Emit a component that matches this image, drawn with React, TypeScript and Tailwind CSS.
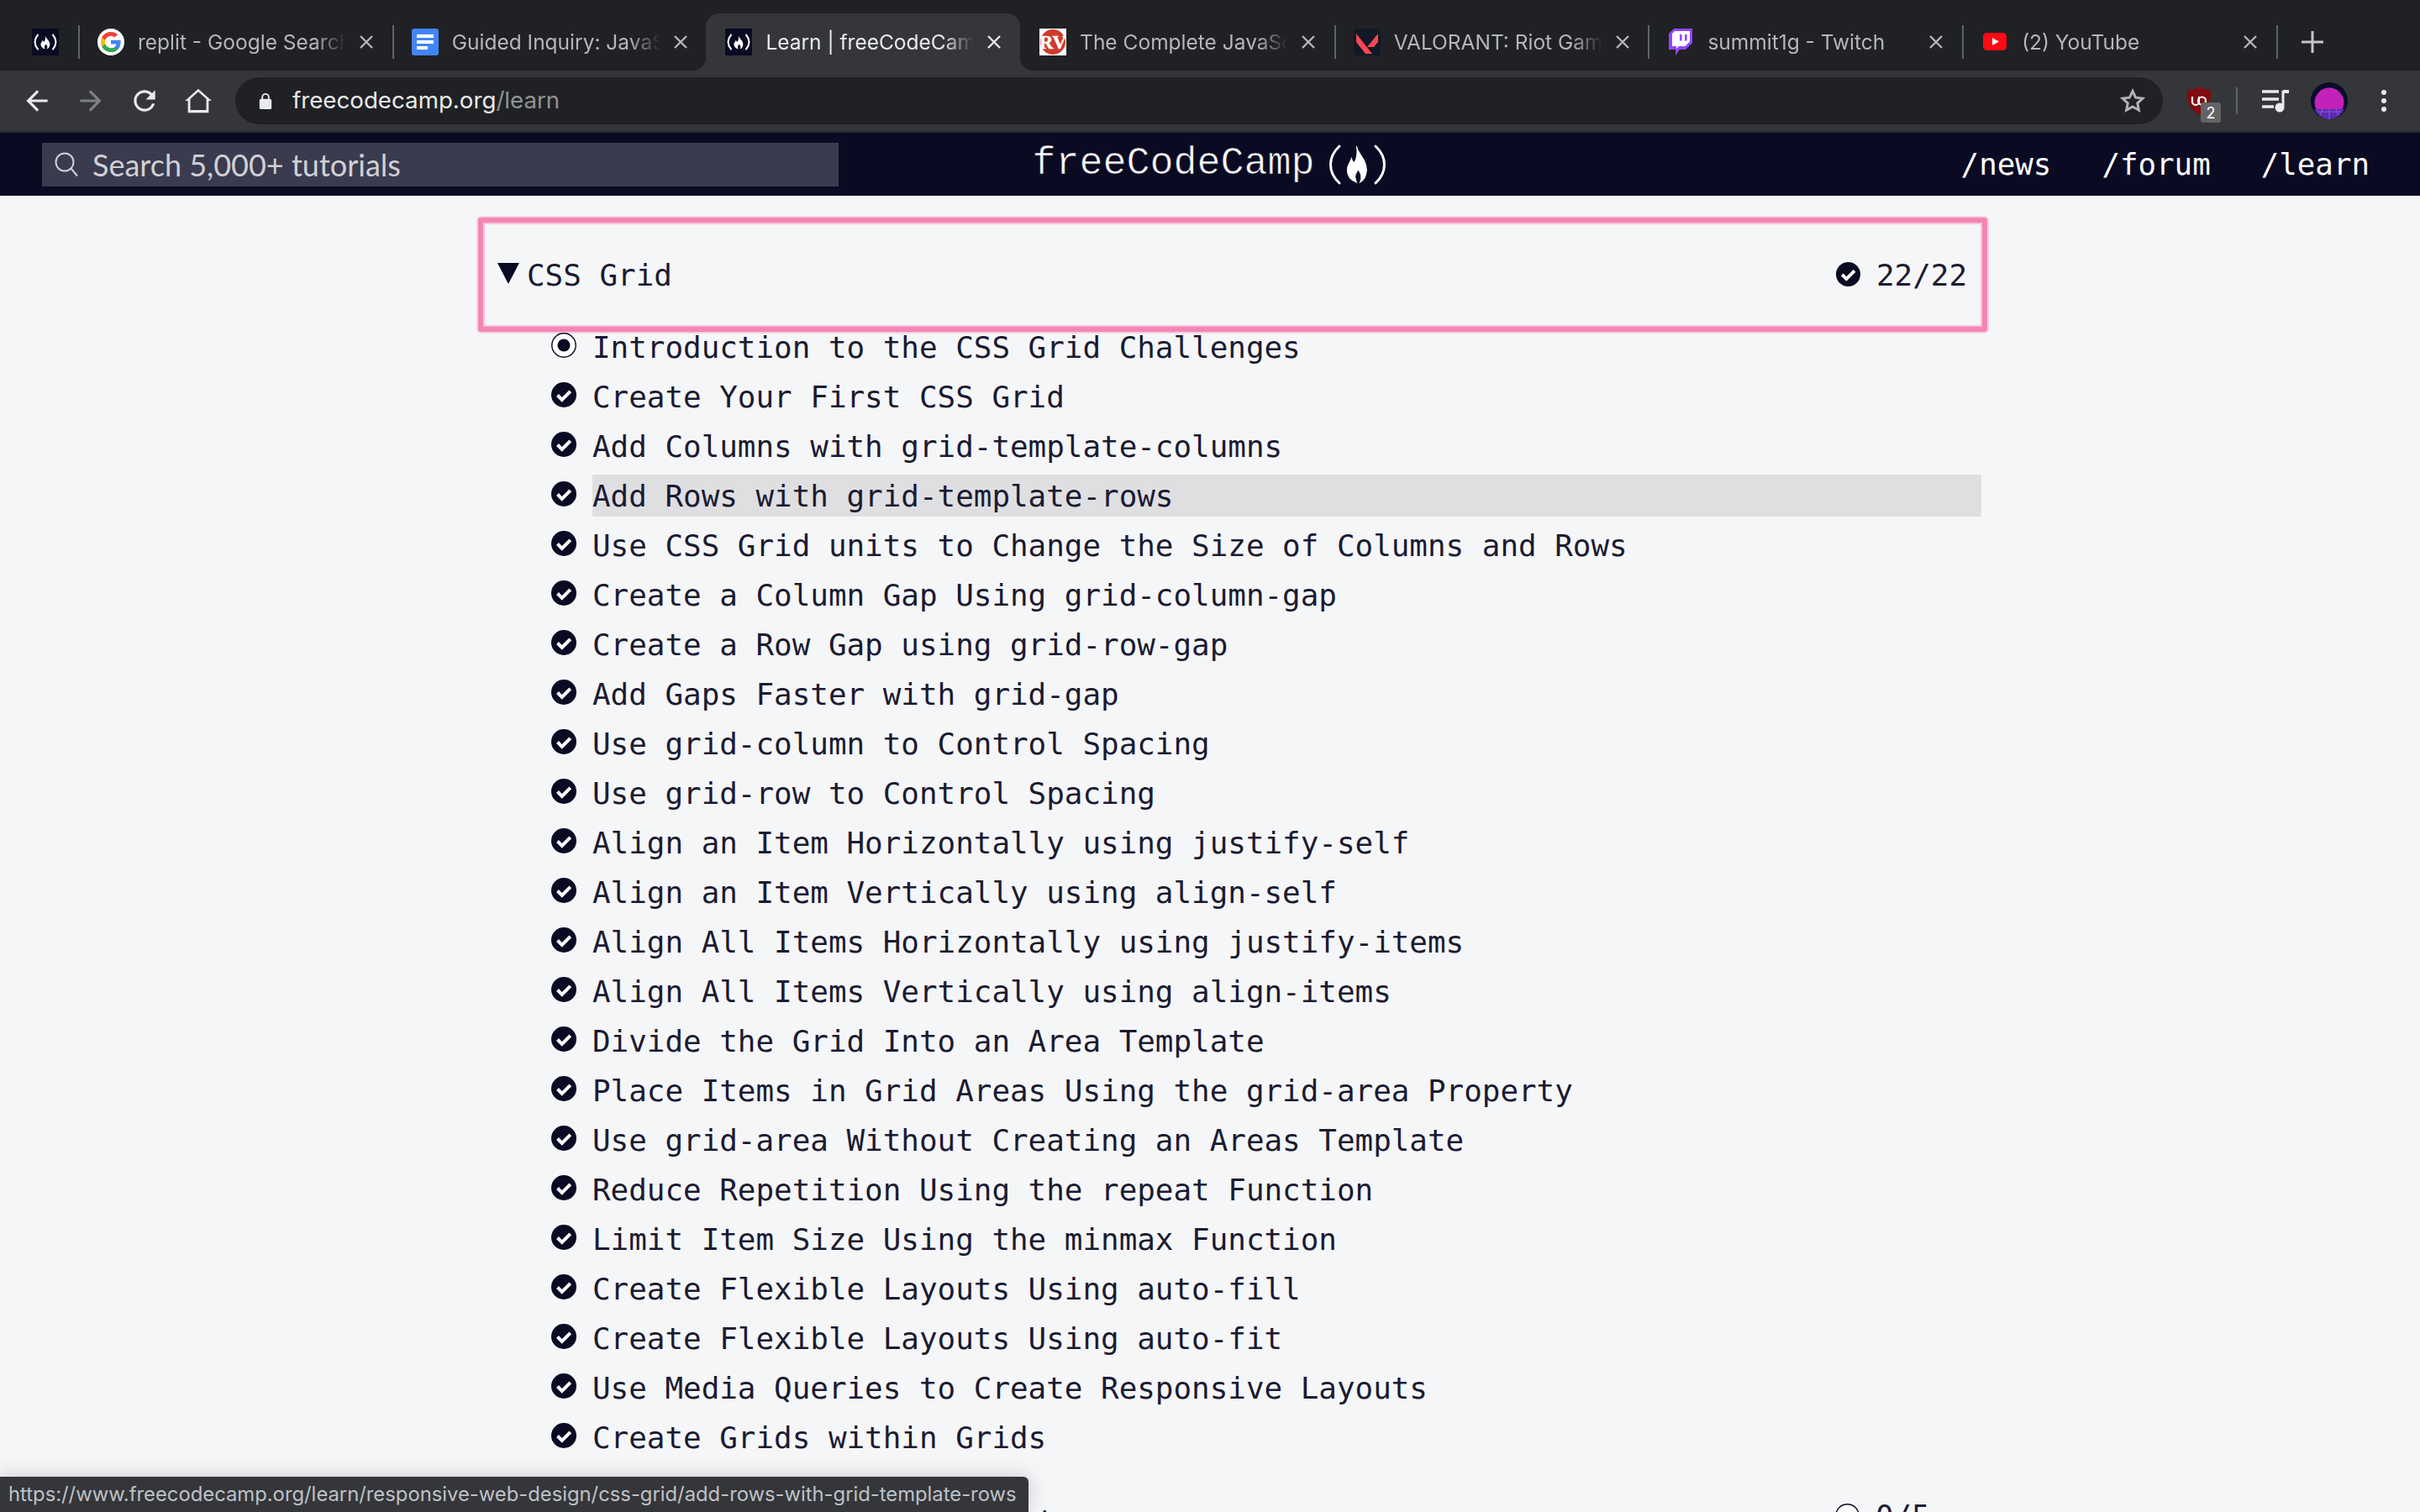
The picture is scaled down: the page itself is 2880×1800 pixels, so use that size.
import React from "react";

const FLAME =
  "M12 1C13 6 19 9 19 15.5C19 19 17 22 14.5 23C16 20.5 15.5 18 13 15C12.5 17 11 17.5 11 19.5C11 21 11.5 22 12 23C8.5 22 5.5 19.5 5.5 15.5C5.5 12.5 7.5 11 8.5 8.5C9 10 9.5 11 10.5 11C12 9 13 5 12 1Z";

function FccIcon() {
  return (
    <svg viewBox="0 0 32 32" className="w-[32px] h-[32px] shrink-0">
      <rect width="32" height="32" fill="#0a0a23" />
      <path d="M7 7.5C2.5 13 2.5 19 7 24.5M25 7.5C29.5 13 29.5 19 25 24.5" stroke="#fff" strokeWidth="2" fill="none" strokeLinecap="round" />
      <g transform="translate(6 7.6) scale(.81 .73)">
        <path d={FLAME} fill="#fff" />
      </g>
    </svg>
  );
}

function GoogleIcon() {
  return (
    <svg viewBox="0 0 32 32" className="w-[32px] h-[32px] shrink-0">
      <circle cx="16" cy="16" r="16" fill="#fff" />
      <g transform="translate(2.8 2.8) scale(1.1)">
        <path fill="#4285F4" d="M22.56 12.25c0-.78-.07-1.53-.2-2.25H12v4.26h5.92c-.26 1.37-1.04 2.53-2.21 3.31v2.77h3.57c2.08-1.92 3.28-4.74 3.28-8.09z" />
        <path fill="#34A853" d="M12 23c2.97 0 5.46-.98 7.28-2.66l-3.57-2.77c-.98.66-2.23 1.06-3.71 1.06-2.86 0-5.29-1.93-6.16-4.53H2.18v2.84C3.99 20.53 7.7 23 12 23z" />
        <path fill="#FBBC05" d="M5.84 14.09c-.22-.66-.35-1.36-.35-2.09s.13-1.43.35-2.09V7.07H2.18C1.43 8.55 1 10.22 1 12s.43 3.45 1.18 4.93l2.85-2.22.81-.62z" />
        <path fill="#EA4335" d="M12 5.38c1.62 0 3.06.56 4.21 1.64l3.15-3.15C17.45 2.09 14.97 1 12 1 7.7 1 3.99 3.47 2.18 7.07l3.66 2.84c.87-2.6 3.3-4.53 6.16-4.53z" />
      </g>
    </svg>
  );
}

function DocsIcon() {
  return (
    <svg viewBox="0 0 32 32" className="w-[32px] h-[32px] shrink-0">
      <rect width="32" height="32" rx="3" fill="#4285f4" />
      <rect x="6" y="7" width="20" height="4" fill="#fff" />
      <rect x="6" y="14" width="20" height="4" fill="#fff" />
      <rect x="6" y="21" width="13" height="4" fill="#fff" />
    </svg>
  );
}

function RvIcon() {
  return (
    <svg viewBox="0 0 32 32" className="w-[32px] h-[32px] shrink-0">
      <rect width="32" height="32" fill="#fff" />
      <circle cx="16" cy="16" r="15" fill="#cf3a2b" />
      <text x="16" y="24" textAnchor="middle" fontFamily="'Liberation Serif',serif" fontWeight="700" fontSize="23" fill="#fff" stroke="#fff" strokeWidth=".5">
        RV
      </text>
    </svg>
  );
}

function ValorantIcon() {
  return (
    <svg viewBox="0 0 32 32" className="w-[32px] h-[32px] shrink-0">
      <rect width="32" height="32" rx="4" fill="#111a24" />
      <polygon points="3,6 22,30 14,30 3,16" fill="#ff4655" />
      <polygon points="29,6 29,16 24,22 16,22" fill="#ff4655" />
    </svg>
  );
}

function TwitchIcon() {
  return (
    <svg viewBox="0 0 28 32" className="w-[28px] h-[32px] shrink-0">
      <path d="M6 0H28V17L20 25H13L8 32V25H0V6Z" fill="#9146ff" />
      <path d="M7 3H25V15.5L19.5 21H12L9 24V21H4V6Z" fill="#fff" />
      <rect x="13" y="7" width="2.6" height="7.5" fill="#9146ff" />
      <rect x="19" y="7" width="2.6" height="7.5" fill="#9146ff" />
    </svg>
  );
}

function YoutubeIcon() {
  return (
    <svg viewBox="0 0 28 32" className="w-[28px] h-[32px] shrink-0">
      <rect x="0" y="5" width="28" height="21" rx="4.5" fill="#ff0a17" />
      <polygon points="11,11 19,15.5 11,20" fill="#fff" />
    </svg>
  );
}

function CloseX({ light }: { light?: boolean }) {
  return (
    <svg viewBox="0 0 20 20" className="w-[20px] h-[20px] shrink-0">
      <path d="M3 3L17 17M17 3L3 17" stroke={light ? "#e8eaed" : "#b4b6ba"} strokeWidth="2.4" strokeLinecap="butt" />
    </svg>
  );
}

function Divider({ hidden }: { hidden?: boolean }) {
  return <span className={hidden ? "w-[2px] h-[40px] shrink-0" : "w-[2px] h-[40px] shrink-0 bg-[#5f6368]"} />;
}

function Tab({ icon, title, active, noDivider }: { icon: React.ReactNode; title: string; active?: boolean; noDivider?: boolean }) {
  return (
    <div className={active ? "relative w-[373.7px] h-[68px] flex items-center rounded-t-[16px] bg-[#35363a] shrink-0" : "relative w-[373.7px] h-[68px] flex items-center shrink-0"}>
      {active && <span className="absolute bottom-0 left-[-16px] w-[16px] h-[16px] bg-[radial-gradient(circle_at_0_0,transparent_16px,#35363a_16.5px)]" />}
      {active && <span className="absolute bottom-0 right-[-16px] w-[16px] h-[16px] bg-[radial-gradient(circle_at_100%_0,transparent_16px,#35363a_16.5px)]" />}
      <Divider hidden={noDivider || active} />
      <div className="ml-[21px] flex w-[32px] shrink-0 justify-center">{icon}</div>
      <div
        className={
          (active ? "text-[#e8eaed] " : "text-[#b4b6ba] ") +
          "ml-[16px] w-[248px] shrink-0 overflow-hidden whitespace-nowrap text-[24.5px] [font-family:Inter,sans-serif] [mask-image:linear-gradient(to_right,black_85%,transparent_100%)]"
        }
      >
        {title}
      </div>
      <div className="ml-[14px]">
        <CloseX light={active} />
      </div>
    </div>
  );
}

function ToolIcon({ d, color }: { d: string; color: string }) {
  return (
    <svg viewBox="0 0 24 24" className="w-[38px] h-[38px] shrink-0" fill={color}>
      <path d={d} />
    </svg>
  );
}

function UblockIcon() {
  return (
    <div className="relative w-[32px] h-[34px]">
      <svg viewBox="0 0 32 34" className="w-[32px] h-[34px]">
        <path d="M16 0C20 3 26 4 30 4C31 16 28 28 16 34C4 28 1 16 2 4C6 4 12 3 16 0Z" fill="#7f0d12" />
        <path d="M8 12V18A4 4 0 0 0 16 18V12M15 17A4.5 4.5 0 1 1 24 17A4.5 4.5 0 1 1 15 17" stroke="#fff" strokeWidth="2.2" fill="none" />
      </svg>
      <span className="absolute left-[18px] top-[19px] flex h-[24px] w-[24px] items-center justify-center rounded-[3px] bg-[#636466] text-[18px] text-white [font-family:Inter,sans-serif]">
        2
      </span>
    </div>
  );
}

function Check({ size = 30 }: { size?: number }) {
  return (
    <svg viewBox="0 0 30 30" style={{ width: size, height: size }} className="shrink-0">
      <circle cx="15" cy="15" r="15" fill="#0a0a23" />
      <path d="M7.5 15.5L12.8 20.8L22.8 10.8" stroke="#fff" strokeWidth="4" fill="none" />
    </svg>
  );
}

function Radio() {
  return (
    <svg viewBox="0 0 30 30" className="w-[30px] h-[30px] shrink-0">
      <circle cx="15" cy="15" r="14.2" fill="#fff" stroke="#0a0a23" strokeWidth="1.4" />
      <circle cx="15" cy="15" r="7.5" fill="#0a0a23" />
    </svg>
  );
}

function Row({ title, current, hover }: { title: string; current?: boolean; hover?: boolean }) {
  return (
    <div className="flex h-[50px] items-center pl-[79px]">
      <div className="mb-[4px] flex w-[30px] shrink-0">{current ? <Radio /> : <Check />}</div>
      <div className={(hover ? "bg-[#dfdfe2] " : "") + "ml-[19px] flex h-[50px] flex-1 items-center whitespace-nowrap pt-[2px]"}>{title}</div>
    </div>
  );
}

const ROWS = [
  "Introduction to the CSS Grid Challenges",
  "Create Your First CSS Grid",
  "Add Columns with grid-template-columns",
  "Add Rows with grid-template-rows",
  "Use CSS Grid units to Change the Size of Columns and Rows",
  "Create a Column Gap Using grid-column-gap",
  "Create a Row Gap using grid-row-gap",
  "Add Gaps Faster with grid-gap",
  "Use grid-column to Control Spacing",
  "Use grid-row to Control Spacing",
  "Align an Item Horizontally using justify-self",
  "Align an Item Vertically using align-self",
  "Align All Items Horizontally using justify-items",
  "Align All Items Vertically using align-items",
  "Divide the Grid Into an Area Template",
  "Place Items in Grid Areas Using the grid-area Property",
  "Use grid-area Without Creating an Areas Template",
  "Reduce Repetition Using the repeat Function",
  "Limit Item Size Using the minmax Function",
  "Create Flexible Layouts Using auto-fill",
  "Create Flexible Layouts Using auto-fit",
  "Use Media Queries to Create Responsive Layouts",
  "Create Grids within Grids",
];

export default function App() {
  return (
    <div className="relative flex h-screen w-full flex-col overflow-hidden bg-[#f5f6f7]">
      {/* tab strip */}
      <div className="flex h-[84px] shrink-0 items-start bg-[#202124] pt-[16px]">
        <div className="flex h-[68px] w-[93px] shrink-0 items-center pl-[38px]">
          <FccIcon />
        </div>
        <Tab icon={<GoogleIcon />} title="replit - Google Search" />
        <Tab icon={<DocsIcon />} title="Guided Inquiry: JavaScript" />
        <Tab icon={<FccIcon />} title="Learn | freeCodeCamp.org" active />
        <Tab icon={<RvIcon />} title="The Complete JavaScript" noDivider />
        <Tab icon={<ValorantIcon />} title="VALORANT: Riot Games" />
        <Tab icon={<TwitchIcon />} title="summit1g - Twitch" />
        <Tab icon={<YoutubeIcon />} title="(2) YouTube" />
        <div className="flex h-[68px] items-center">
          <Divider />
          <svg viewBox="0 0 26 26" className="ml-[28px] h-[26px] w-[26px]">
            <path d="M13 0V26M0 13H26" stroke="#c4c6ca" strokeWidth="3" />
          </svg>
        </div>
      </div>

      {/* toolbar */}
      <div className="flex h-[72px] shrink-0 items-center bg-[#35363a] pl-[25px]">
        <div className="flex w-[255px] shrink-0 items-center gap-[26px]">
          <ToolIcon color="#e8eaed" d="M20 11H7.83l5.59-5.59L12 4l-8 8 8 8 1.41-1.41L7.83 13H20z" />
          <ToolIcon color="#7f8185" d="M4 11h12.17l-5.59-5.59L12 4l8 8-8 8-1.41-1.41L16.17 13H4z" />
          <ToolIcon color="#e8eaed" d="M17.65 6.35A7.958 7.958 0 0012 4c-4.42 0-7.99 3.58-7.99 8s3.57 8 7.99 8c3.73 0 6.84-2.55 7.73-6h-2.08A5.99 5.99 0 0112 18c-3.31 0-6-2.69-6-6s2.69-6 6-6c1.66 0 3.14.69 4.22 1.78L13 11h7V4l-2.35 2.35z" />
          <ToolIcon color="#e8eaed" d="M12 5.2l6 5.4V19H6v-8.4l6-5.4M12 3L2 12h2.2v9h15.6v-9H22L12 3z" />
        </div>
        <div className="flex h-[56px] w-[2294px] shrink-0 items-center rounded-full bg-[#202124] pl-[28px] pr-[21px] text-[27.7px] [font-family:Inter,sans-serif]">
          <svg viewBox="0 0 16 22" className="h-[21px] w-[16px] shrink-0">
            <path d="M4 9V6a4 4 0 0 1 8 0v3" stroke="#e8eaed" strokeWidth="2" fill="none" />
            <rect x="0.5" y="8" width="15" height="13" rx="2" fill="#e8eaed" />
          </svg>
          <span className="ml-[24px] text-[#e8eaed]">freecodecamp.org</span>
          <span className="text-[#8f9296]">/learn</span>
          <svg viewBox="0 0 24 24" className="ml-auto h-[30px] w-[30px]" fill="none" stroke="#b0b2b6" strokeWidth="2.4">
            <path d="M12 2.8l2.9 6.1 6.6.8-4.9 4.6 1.3 6.6-5.9-3.3-5.9 3.3 1.3-6.6-4.9-4.6 6.6-.8z" />
          </svg>
        </div>
        <div className="ml-[27px]">
          <UblockIcon />
        </div>
        <span className="ml-[28px] h-[32px] w-[2px] bg-[#5f6368]" />
        <svg viewBox="0 0 32 28" className="ml-[29px] h-[28px] w-[32px]">
          <path d="M0 3H20M0 12H20M0 21H14" stroke="#e8eaed" strokeWidth="3.4" />
          <path d="M25 2V21" stroke="#e8eaed" strokeWidth="3" />
          <path d="M25 1H32V5H25Z" fill="#e8eaed" />
          <circle cx="21" cy="22" r="5.5" fill="#e8eaed" />
        </svg>
        <svg viewBox="0 0 44 44" className="ml-[26px] h-[44px] w-[44px]">
          <circle cx="22" cy="22" r="22" fill="#090c2a" />
          <circle cx="22" cy="24" r="17.5" fill="#c222b8" />
          <path d="M4 32H40C37 38 30 44 22 44C14 44 7 38 4 32Z" fill="#5b2bb0" />
          <path d="M8 35H36M22 32V44M14 32L11 40M30 32L33 40" stroke="#8d5ae0" strokeWidth="1" />
        </svg>
        <svg viewBox="0 0 6 26" className="ml-[40px] h-[26px] w-[6px]">
          <circle cx="3" cy="3" r="3" fill="#e8eaed" />
          <circle cx="3" cy="13" r="3" fill="#e8eaed" />
          <circle cx="3" cy="23" r="3" fill="#e8eaed" />
        </svg>
      </div>
      <div className="h-[2px] shrink-0 bg-[#29292c]" />

      {/* site header */}
      <header className="grid h-[75px] shrink-0 grid-cols-[1fr_auto_1fr] items-center bg-[#0a0a23] pl-[50px] pr-[60px]">
        <div className="flex h-[52px] w-[948px] items-center bg-[#3b3b4f] pl-[15px]">
          <svg viewBox="0 0 28 30" className="h-[30px] w-[28px]" fill="none" stroke="#d0d0d5" strokeWidth="2">
            <circle cx="12" cy="12" r="10.5" />
            <path d="M19.5 19.5L27 28.5" />
          </svg>
          <span className="ml-[17px] text-[36px] text-[#d0d0d5] [font-family:Lato,sans-serif]">Search 5,000+ tutorials</span>
        </div>
        <div className="ml-[10px] flex items-center justify-center text-[46.7px] leading-none text-white [-webkit-text-stroke:0.7px_#0a0a23] [font-family:'Liberation_Mono',monospace]">
          <span>freeCodeCamp</span>
          <svg viewBox="0 0 87 58" className="h-[58px] w-[87px]">
            <path d="M29 7C15 20 15 38 29 51M72 7C86 20 86 38 72 51" stroke="#fff" strokeWidth="3" fill="none" strokeLinecap="round" />
            <g transform="translate(29 5) scale(1.7 1.95)">
              <path d={FLAME} fill="#fff" stroke="#fff" strokeWidth=".6" />
            </g>
          </svg>
        </div>
        <nav className="flex items-center justify-end gap-[60px] text-[35.8px] text-white [font-family:'DejaVu_Sans_Mono',monospace]">
          <span>/news</span>
          <span>/forum</span>
          <span>/learn</span>
        </nav>
      </header>

      {/* main */}
      <main className="ml-[567px] w-[1800px] pt-[24px] text-[35.9px] text-[#1b1b32] [font-family:'DejaVu_Sans_Mono',monospace]">
        <div className="h-[140px] rounded-[6px] border-[2px] border-[#f6cfe0]">
          <div className="h-full rounded-[3px] border-[6px] border-[#f286b5]">
            <div className="flex h-full items-center justify-between pl-[17px] pr-[18px] shadow-[inset_0_0_0_2px_#f6c3da]">
              <div className="flex items-center">
                <svg viewBox="0 0 26 25" className="mb-[2px] h-[25px] w-[26px]">
                  <polygon points="0,0 26,0 13,25" fill="#0a0a23" />
                </svg>
                <span className="ml-[9px] pt-[1px]">CSS Grid</span>
              </div>
              <div className="flex items-center">
                <Check size={29} />
                <span className="ml-[19px] pt-[1px]">22/22</span>
              </div>
            </div>
          </div>
        </div>
        <div className="-mt-[9px] ml-[10px] mr-[9px] flex flex-col gap-[9px]">
          {ROWS.map((t, i) => (
            <Row key={t} title={t} current={i === 0} hover={i === 3} />
          ))}
        </div>
        <div className="ml-[10px] mr-[9px] mt-[9px] flex h-[120px] items-center justify-between pl-[17px] pr-[18px]">
          <div className="flex items-center">
            <svg viewBox="0 0 26 25" className="h-[25px] w-[26px]">
              <polygon points="0,0 26,12.5 0,25" fill="#0a0a23" />
            </svg>
            <span className="ml-[9px] pt-[12px]">Responsive Web Design Projects</span>
          </div>
          <div className="flex items-center">
            <svg viewBox="0 0 30 30" className="h-[29px] w-[29px]">
              <circle cx="15" cy="15" r="14.2" fill="#fff" stroke="#0a0a23" strokeWidth="1.4" />
            </svg>
            <span className="ml-[19px] w-[108px]">0/5</span>
          </div>
        </div>
      </main>

      {/* link status bubble */}
      <div className="absolute bottom-0 left-0 flex h-[42px] w-[1224px] items-center overflow-hidden rounded-tr-[6px] bg-[#35363a] pl-[10px] text-[23.8px] whitespace-nowrap text-[#bdc1c6] shadow-[0_0_24px_rgba(0,0,0,0.18)] [font-family:Inter,sans-serif]">
        https://www.freecodecamp.org/learn/responsive-web-design/css-grid/add-rows-with-grid-template-rows
      </div>
    </div>
  );
}
